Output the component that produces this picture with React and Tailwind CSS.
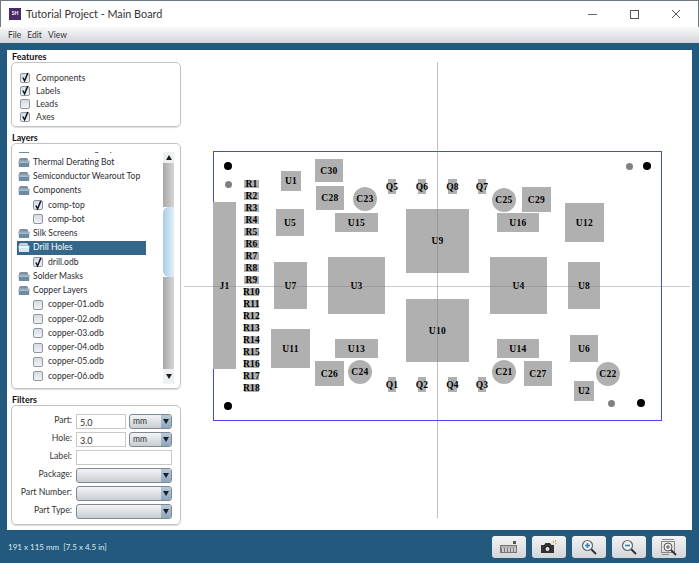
import React from 'react';

const FONT = "font-['Lato','Noto_Sans',sans-serif]";

// pcb parts: [label, x0, y0, x1, y1], page coordinates (canvas starts at 184,50 offset below)
const RECTS = [
  ['U1', 281, 171, 301, 191], ['C30', 315, 159, 343, 182], ['C28', 316, 186, 344, 210],
  ['U5', 276, 209, 304, 236], ['U15', 335, 213, 378, 232], ['Q5', 388, 179, 396, 194],
  ['Q6', 418, 179, 426, 194], ['Q8', 448, 179, 457, 194], ['Q7', 478, 179, 486, 194],
  ['U9', 406, 209, 469, 273], ['J1', 213, 202, 236, 369], ['U7', 274, 262, 307, 309],
  ['U3', 328, 257, 385, 314], ['U11', 271, 329, 310, 368], ['U13', 335, 339, 378, 358],
  ['C26', 315, 361, 344, 386], ['Q1', 388, 377, 396, 392], ['Q2', 418, 377, 426, 392],
  ['Q4', 448, 377, 457, 392], ['Q3', 478, 377, 486, 392], ['U10', 406, 299, 469, 362],
  ['C29', 522, 187, 551, 212], ['U16', 497, 213, 539, 232], ['U12', 565, 203, 604, 242],
  ['U4', 490, 257, 547, 314], ['U8', 568, 262, 600, 309], ['U14', 497, 339, 539, 358],
  ['U6', 570, 335, 598, 362], ['C27', 524, 361, 552, 386], ['U2', 574, 381, 594, 401],
];
const CAPS = [['C23', 365, 199], ['C24', 360, 372], ['C25', 504, 200], ['C21', 504, 372], ['C22', 608, 374]];
const DRILLS = [
  [228, 166, 4, '#000'], [228, 184, 3.5, '#808080'], [629, 166, 3.5, '#808080'], [647, 166, 4, '#000'],
  [228, 406, 4, '#000'], [611, 403, 3.5, '#808080'], [641, 403, 4, '#000'],
];
const RES = Array.from({ length: 18 }, (_, i) => ['R' + (i + 1), 184 + i * 12]);

const OX = 184;
const OY = 50;

const Check = ({ on }) => (
  <span className="w-[10px] h-[10px] shrink-0 rounded-[2px] border border-[#8e969e] bg-gradient-to-b from-[#d5dce4] to-[#f0f2f5] flex items-center justify-center">
    {on && (
      <svg width="9" height="9" viewBox="0 0 9 9" className="overflow-visible">
        <path d="M1.8 4.5 L3.6 7.8 L6.8 0" fill="none" stroke="#10151c" strokeWidth="1.5" />
      </svg>
    )}
  </span>
);

const Folder = ({ light }) => (
  <svg width="12" height="11" viewBox="0 0 13 12" className="shrink-0">
    <path d="M1 3 Q1 1 3 1 L9 1 Q11 1 11 3 L11 4 L1 4Z" fill={light ? '#c5d3dd' : '#7d8f9e'} />
    <path d="M0.5 4 L12.5 4 L12 11 L1 11Z" fill={light ? '#dbe5ec' : '#6c8aa2'} />
    <path d="M1 4.5 L12 4.5 L11.8 6.5 L1.2 6.5Z" fill={light ? '#eef3f6' : '#a9bccb'} />
  </svg>
);

const Section = ({ title, className, children }) => (
  <div>
    <div className="h-[10px] pl-[1px] text-[9px] leading-[10px] font-bold text-[#111]">{title}</div>
    <div className={`w-[170px] rounded-[5px] border border-[#c4c4c4] shadow-[0_1px_1px_#ddd] ${className}`}>{children}</div>
  </div>
);

const Arrow = ({ up }) => (
  <svg width="6" height="5" viewBox="0 0 6 5">
    <path d={up ? 'M3 0 L6 5 L0 5Z' : 'M0 0 L6 0 L3 5Z'} fill="#1b1f24" />
  </svg>
);

const Select = ({ text, w }) => (
  <div className={`${w} h-[15px] rounded-[3px] border border-[#7f8994] bg-gradient-to-b from-[#f3f4f6] to-[#c9ced4] flex items-center justify-between overflow-hidden`}>
    <span className="pl-[3px] text-[8.5px] text-[#333]">{text}</span>
    <span className="w-[10px] h-full bg-gradient-to-b from-[#b8c8d8] to-[#8ea6bd] flex items-center justify-center">
      <Arrow />
    </span>
  </div>
);

const Input = ({ text, w }) => (
  <div className={`${w} h-[15px] border border-[#c9c9c9] pl-[3px] text-[9px] leading-[15px] text-[#333]`}>{text}</div>
);

const FolderRow = ({ label, selected }) => (
  <div className={`h-[14.25px] flex items-center gap-[3px] pl-[1px] text-[8.6px] whitespace-nowrap ${selected ? 'bg-[#34678a] text-white' : 'text-[#2b2b33]'}`}>
    <Folder light={selected} />
    <span>{label}</span>
  </div>
);

const FileRow = ({ label, on }) => (
  <div className="h-[14.25px] flex items-center gap-[5px] pl-[16px] text-[8.6px] whitespace-nowrap text-[#2b2b33]">
    <Check on={on} />
    <span>{label}</span>
  </div>
);

const FilterLabel = ({ children }) => (
  <span className="w-[56px] mb-[4px] text-right text-[8.7px] text-[#333] whitespace-nowrap">{children}</span>
);

const ToolButton = ({ children }) => (
  <button className="w-[34px] h-[22px] rounded-[3px] bg-gradient-to-b from-[#f2f3f4] to-[#d3d6d9] flex items-center justify-center">
    {children}
  </button>
);

const Label = ({ children }) => (
  <span className="inline-block translate-y-[1px] font-['Liberation_Serif',serif] font-bold text-[9.5px] tracking-[0.3px] leading-none text-black whitespace-nowrap">{children}</span>
);

const Glass = ({ sign }) => (
  <svg width="18" height="18" viewBox="0 0 18 18">
    <path d="M10.5 10.5 L16 16" stroke="#333" strokeWidth="2" />
    <circle cx="7.5" cy="7.5" r="5" fill="#eef3f7" stroke="#666" strokeWidth="1.2" />
    <path d="M5 7.5 H10" stroke="#3a7fb5" strokeWidth="1.6" />
    {sign === 'plus' && <path d="M7.5 5 V10" stroke="#3a7fb5" strokeWidth="1.6" />}
  </svg>
);

const Canvas = () => (
  <div className="relative flex-1 overflow-hidden">
    {/* board outline */}
    <div className="absolute left-[29px] top-[101px] w-[449px] h-[270px] border border-[#4646ff]" />
    {RECTS.map(([t, x0, y0, x1, y1]) => (
      <div
        key={t}
        className="absolute bg-[#b0b0b0] flex items-center justify-center"
        style={{ left: x0 - OX, top: y0 - OY, width: x1 - x0, height: y1 - y0 }}
      >
        <Label>{t}</Label>
      </div>
    ))}
    {CAPS.map(([t, x, y]) => (
      <div
        key={t}
        className="absolute w-[24px] h-[24px] rounded-full bg-[#b0b0b0] flex items-center justify-center"
        style={{ left: x - 12 - OX, top: y - 12 - OY }}
      >
        <Label>{t}</Label>
      </div>
    ))}
    {RES.map(([t, y]) => (
      <div
        key={t}
        className="absolute w-[15px] h-[8px] bg-[#b0b0b0] flex items-center justify-center"
        style={{ left: 244 - OX, top: y - 4 - OY }}
      >
        <Label>{t}</Label>
      </div>
    ))}
    {DRILLS.map(([x, y, r, c]) => (
      <div
        key={`${x}-${y}`}
        className="absolute rounded-full"
        style={{ left: x - r - OX, top: y - r - OY, width: r * 2, height: r * 2, background: c }}
      />
    ))}
    {/* axes */}
    <div className="absolute left-[253px] top-[12px] w-px h-[456px] bg-[#7f7f7f]/50" />
    <div className="absolute left-0 top-[236px] w-[506px] h-px bg-[#7f7f7f]/40" />
  </div>
);

export default function App() {
  return (
    <div className={`w-[699px] h-[563px] flex flex-col overflow-hidden bg-[#23597d] ${FONT}`}>
      {/* title bar */}
      <div className="h-[27px] shrink-0 bg-white border-t border-x border-[#6d7882] flex items-center pl-[8px]">
        <span className="w-[12px] h-[12px] bg-[#4b2a6b] text-white text-[5px] font-bold flex items-center justify-center">SH</span>
        <span className="ml-[5px] text-[10.8px] text-[#333]">Tutorial Project - Main Board</span>
        <div className="ml-auto flex items-center">
          <svg width="110" height="18" viewBox="0 0 110 18">
            <path d="M0 9.5 H9" stroke="#666" strokeWidth="1" />
            <rect x="42.5" y="5.5" width="8" height="8" fill="none" stroke="#555" />
            <path d="M84 5 L92 13 M92 5 L84 13" stroke="#555" strokeWidth="1" />
          </svg>
        </div>
      </div>
      {/* menu */}
      <div className="h-[16px] shrink-0 bg-gradient-to-b from-[#f9f9fb] to-[#d3d5da] flex items-center gap-[6px] pl-[8px] text-[8.5px] text-[#333]">
        <span>File</span>
        <span>Edit</span>
        <span>View</span>
      </div>
      {/* main panel */}
      <div className="mt-[7px] mx-[7px] h-[480px] bg-white flex">
        <div className="w-[177px] shrink-0 pl-[4px] pt-[2px] flex flex-col gap-[6px]">
          <Section title="Features" className="h-[65px] pt-[8px] pl-[8px]">
            {[['Components', true], ['Labels', true], ['Leads', false], ['Axes', true]].map(([t, on]) => (
              <div key={t} className="h-[13px] flex items-center gap-[6px] text-[8.8px] text-[#333]">
                <Check on={on} />
                <span>{t}</span>
              </div>
            ))}
          </Section>
          <Section title="Layers" className="h-[246px] flex pt-[8px] pb-[4px] pl-[5px]">
            <div className="w-[129px] overflow-hidden">
              <div className="-mt-[11px]">
                <FolderRow label="Thermal Derating Top" />
                <FolderRow label="Thermal Derating Bot" />
                <FolderRow label="Semiconductor Wearout Top" />
                <FolderRow label="Components" />
                <FileRow label="comp-top" on />
                <FileRow label="comp-bot" />
                <FolderRow label="Silk Screens" />
                <FolderRow label="Drill Holes" selected />
                <FileRow label="drill.odb" on />
                <FolderRow label="Solder Masks" />
                <FolderRow label="Copper Layers" />
                <FileRow label="copper-01.odb" />
                <FileRow label="copper-02.odb" />
                <FileRow label="copper-03.odb" />
                <FileRow label="copper-04.odb" />
                <FileRow label="copper-05.odb" />
                <FileRow label="copper-06.odb" />
              </div>
            </div>
            {/* scrollbar */}
            <div className="ml-[17px] w-[11px] flex flex-col">
              <div className="h-[11px] shrink-0 bg-[#eef0f2] flex items-center justify-center"><Arrow up /></div>
              <div className="h-[44px] shrink-0 bg-gradient-to-r from-[#a8a8a8] to-[#d6d6d6]" />
              <div className="h-[70px] shrink-0 rounded-l-[6px] bg-gradient-to-r from-[#a8cde6] to-[#e2eff8]" />
              <div className="flex-1 bg-gradient-to-r from-[#a8a8a8] to-[#d6d6d6]" />
              <div className="h-[15px] shrink-0 bg-[#eef0f2] flex items-center justify-center"><Arrow /></div>
            </div>
          </Section>
          <Section title="Filters" className="h-[120px] pt-[8px] pl-[4px] flex flex-col gap-[3px]">
            <div className="flex items-center h-[15px]">
              <FilterLabel>Part:</FilterLabel>
              <span className="ml-[4px]"><Input text="5.0" w="w-[50px]" /></span>
              <span className="ml-[3px]"><Select text="mm" w="w-[43px]" /></span>
            </div>
            <div className="flex items-center h-[15px]">
              <FilterLabel>Hole:</FilterLabel>
              <span className="ml-[4px]"><Input text="3.0" w="w-[50px]" /></span>
              <span className="ml-[3px]"><Select text="mm" w="w-[43px]" /></span>
            </div>
            <div className="flex items-center h-[15px]">
              <FilterLabel>Label:</FilterLabel>
              <span className="ml-[4px]"><Input w="w-[96px]" /></span>
            </div>
            {['Package:', 'Part Number:', 'Part Type:'].map((t) => (
              <div key={t} className="flex items-center h-[15px]">
                <FilterLabel>{t}</FilterLabel>
                <span className="ml-[4px]"><Select w="w-[96px]" /></span>
              </div>
            ))}
          </Section>
        </div>
        <Canvas />
      </div>
      {/* status bar */}
      <div className="flex-1 flex items-center justify-between pl-[8px] pr-[13px] pt-[1px]">
        <span className="text-[8px] text-[#dce7ef] whitespace-pre">191 x 115 mm  [7.5 x 4.5 in]</span>
        <div className="flex gap-[6px]">
          <ToolButton>
            <svg width="20" height="14" viewBox="0 0 20 14">
              <rect x="1" y="5" width="17" height="8" fill="#777" />
              <path d="M4 8 V12 M7 8 V12 M10 8 V12 M13 8 V12 M16 8 V12" stroke="#eee" strokeWidth="1.4" />
              <path d="M2 7 H17" stroke="#eee" />
              <rect x="14" y="1" width="3" height="3" fill="#555" />
            </svg>
          </ToolButton>
          <ToolButton>
            <svg width="18" height="16" viewBox="0 0 18 16">
              <path d="M1 6 H4 L5.5 4 H10 L11.5 6 H14 V14 H1Z" fill="#333" />
              <circle cx="7.5" cy="10" r="2.6" fill="#ddd" stroke="#111" />
              <path d="M13 2 L14 4 M15.5 1 L15.5 3 M16.5 4.5 L15 5" stroke="#d9a441" strokeWidth="1" />
            </svg>
          </ToolButton>
          <ToolButton><Glass sign="plus" /></ToolButton>
          <ToolButton><Glass sign="minus" /></ToolButton>
          <ToolButton>
            <svg width="20" height="18" viewBox="0 0 20 18">
              <path d="M3 1.5 H15 M3 16.5 H10" stroke="#888" />
              <rect x="2.5" y="3.5" width="13" height="11" fill="none" stroke="#888" />
              <circle cx="9" cy="9" r="4" fill="#eee" stroke="#555" />
              <path d="M7 9 H11 M9 7 V11" stroke="#555" />
              <path d="M12 12 L17 17" stroke="#333" strokeWidth="1.8" />
            </svg>
          </ToolButton>
        </div>
      </div>
    </div>
  );
}
